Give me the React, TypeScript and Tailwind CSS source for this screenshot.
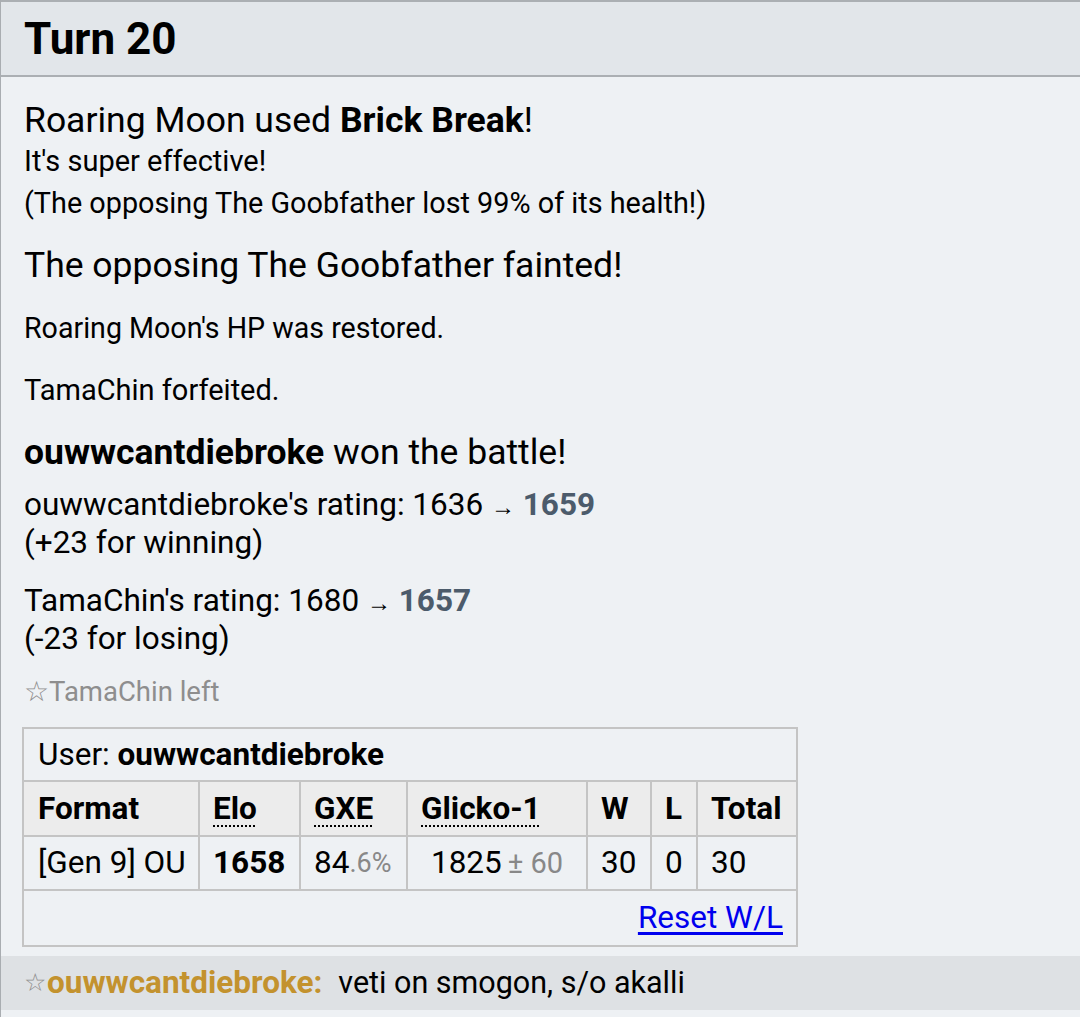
import React from "react";

const cell = "flex items-center border-r-2 border-[#c4c4c4]";

export default function App() {
  return (
    <div className="w-[1080px] h-[1017px] overflow-hidden bg-[#eef1f4] border-l border-[#a9adb1] text-black" style={{ fontFamily: "Roboto, 'Noto Sans', sans-serif" }}>
      <div className="h-[77px] border-t-2 border-b-2 border-[#abafb3] bg-[#e2e6ea] pl-[23px] flex items-center">
        <span className="text-[44px] font-bold leading-none">Turn 20</span>
      </div>
      <div className="pl-[23px] pt-[23px]">
        <div className="text-[35.5px] leading-[40px] h-[40px] whitespace-nowrap">
          Roaring Moon used <b>Brick Break</b>!
        </div>
        <div className="text-[29px] leading-[42px] h-[42px]">It's super effective!</div>
        <div className="text-[28.8px] leading-[42px] h-[42px] whitespace-nowrap">(The opposing The Goobfather lost 99% of its health!)</div>
        <div className="mt-[21px] text-[35.5px] leading-[40px] h-[40px] whitespace-nowrap">The opposing The Goobfather fainted!</div>
        <div className="mt-[23px] text-[28.6px] leading-[40px] h-[40px]">Roaring Moon's HP was restored.</div>
        <div className="mt-[22px] text-[29px] leading-[40px] h-[40px]">TamaChin forfeited.</div>
        <div className="mt-[22px] text-[35.5px] leading-[40px] h-[40px] whitespace-nowrap">
          <b>ouwwcantdiebroke</b> won the battle!
        </div>
        <div className="mt-[14px] text-[31.5px] leading-[38px] h-[38px] whitespace-nowrap">
          ouwwcantdiebroke's rating: 1636 <span className="text-[24px]">→</span> <b className="text-[#4c5b6b]">1659</b>
        </div>
        <div className="text-[31.5px] leading-[38px] h-[38px]">(+23 for winning)</div>
        <div className="mt-[20px] text-[31.5px] leading-[38px] h-[38px] whitespace-nowrap">
          TamaChin's rating: 1680 <span className="text-[24px]">→</span> <b className="text-[#4c5b6b]">1657</b>
        </div>
        <div className="text-[31.5px] leading-[38px] h-[38px]">(-23 for losing)</div>
        <div className="mt-[14px] text-[27.5px] leading-[40px] h-[40px] text-[#8e8e8e]">☆TamaChin left</div>
      </div>
      <div className="mt-[15px] ml-[21px] w-[776px] border-2 border-[#c4c4c4] text-[31.5px] leading-[38px]">
        <div className="h-[53px] flex items-center pl-[14px] border-b-2 border-[#c4c4c4] whitespace-nowrap">
          User:&nbsp;<b>ouwwcantdiebroke</b>
        </div>
        <div className="grid grid-cols-[176px_101px_107px_180px_64px_46px_1fr] bg-[#ececec] border-b-2 border-[#c4c4c4] font-bold h-[55px]">
          <div className={`${cell} pl-[14px]`}>Format</div>
          <div className={`${cell} pl-[13px]`}><span className="underline decoration-dotted decoration-2 underline-offset-[7px]">Elo</span></div>
          <div className={`${cell} pl-[13px]`}><span className="underline decoration-dotted decoration-2 underline-offset-[7px]">GXE</span></div>
          <div className={`${cell} pl-[13px]`}><span className="underline decoration-dotted decoration-2 underline-offset-[7px]">Glicko-1</span></div>
          <div className={`${cell} pl-[13px]`}>W</div>
          <div className={`${cell} pl-[13px]`}>L</div>
          <div className="flex items-center pl-[13px]">Total</div>
        </div>
        <div className="grid grid-cols-[176px_101px_107px_180px_64px_46px_1fr] border-b-2 border-[#c4c4c4] h-[54px]">
          <div className={`${cell} pl-[14px] whitespace-nowrap`}>[Gen 9] OU</div>
          <div className={`${cell} pl-[13px] font-bold`}>1658</div>
          <div className={`${cell} pl-[13px]`}>84<span className="text-[#888] text-[27px]">.6%</span></div>
          <div className={`${cell} justify-center whitespace-nowrap`}>1825<span className="text-[#888] text-[29px] ml-[6px]">± 60</span></div>
          <div className={`${cell} pl-[13px]`}>30</div>
          <div className={`${cell} pl-[13px]`}>0</div>
          <div className="flex items-center pl-[13px]">30</div>
        </div>
        <div className="h-[54px] flex items-center justify-end pr-[13px]">
          <a className="text-[#0000ee] underline underline-offset-[4px]" href="#">Reset W/L</a>
        </div>
      </div>
      <div className="mt-[9px] h-[54px] bg-[#dee1e4] flex items-center pl-[23px] text-[30.5px] whitespace-nowrap">
        <span className="text-[#8e8e8e] text-[25px] mr-[1px]">☆</span>
        <b className="text-[#c3922e] text-[31.5px]">ouwwcantdiebroke:</b>
        <span className="ml-[16px]">veti on smogon, s/o akalli</span>
      </div>
    </div>
  );
}
